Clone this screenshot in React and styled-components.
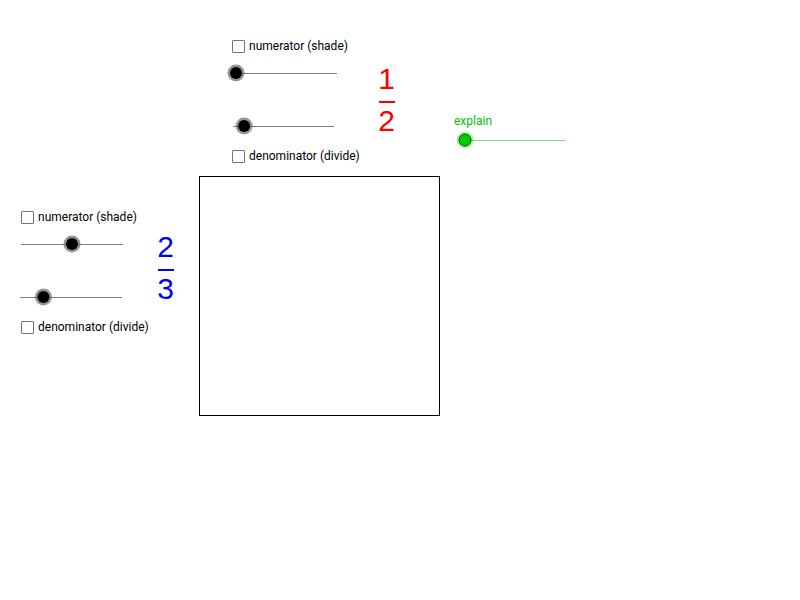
import React from 'react';
import styled, { createGlobalStyle } from 'styled-components';

const Global = createGlobalStyle`
  html, body {
    margin: 0;
    padding: 0;
    background: #fff;
  }
  body {
    font-family: Roboto, "Liberation Sans", sans-serif;
  }
`;

// the applet's drawing pad: every widget sits at its own spot on it
const Canvas = styled.div`
  position: relative;
  width: 800px;
  height: 600px;
  overflow: hidden;
  background: #fff;
`;

const Widget = styled.div`
  position: absolute;
  left: ${p => p.$x}px;
  top: ${p => p.$y}px;
  display: flex;
  align-items: flex-start;
`;

const Controls = styled.div`
  display: flex;
  flex-direction: column;
  align-items: flex-start;
  width: ${p => p.$width}px;
`;

const CheckRow = styled.label`
  display: flex;
  align-items: center;
  gap: 4px;
  height: 13px;
  margin-top: ${p => p.$gap || 0}px;
  font-size: 12px;
  line-height: 13px;
  color: #000;
  white-space: nowrap;
`;

const Box = styled.span`
  display: inline-block;
  width: 11px;
  height: 11px;
  border: 1px solid #757575;
  border-radius: 1px;
  background: #fff;
`;

const SliderSvg = styled.svg`
  display: block;
  margin-top: ${p => p.$gap || 0}px;
  margin-left: ${p => p.$shift || 0}px;
`;

const ExplainBox = styled.div`
  display: flex;
  flex-direction: column;
  gap: 2px;
`;

const Label = styled.span`
  font-size: 12px;
  line-height: 14px;
  color: ${p => p.$color || '#000'};
`;

const Frac = styled.div`
  display: flex;
  flex-direction: column;
  align-items: center;
  width: 19px;
  margin-top: ${p => p.$top}px;
  color: ${p => p.$color};
  font-family: "Liberation Sans", Arial, sans-serif;
  font-size: 30px;
  line-height: 30px;
`;

const Bar = styled.div`
  width: 16px;
  height: 1.5px;
  margin: 7px 0 3.5px;
  background: ${p => p.$color};
`;

const Square = styled.div`
  position: absolute;
  left: 199px;
  top: 176px;
  width: 239px;
  height: 238px;
  border: 1.5px solid #000;
`;

const Check = ({ gap, children }) => (
  <CheckRow $gap={gap}>
    <Box />
    {children}
  </CheckRow>
);

const Slider = ({
  length = 101,
  value,
  gap,
  shift,
  track = '#808080',
  fill = '#000',
  ring = 'rgba(80,80,80,0.6)',
  edge,
}) => {
  const kx = 10 + length * value;
  return (
    <SliderSvg width={length + 20} height={20} $gap={gap} $shift={shift}>
      <line x1={10} y1={10.5} x2={10 + length} y2={10.5} stroke={track} strokeWidth={1} />
      <circle cx={kx} cy={10} r={8.5} fill={ring} />
      <circle cx={kx} cy={10} r={6} fill={fill} stroke={edge || 'none'} strokeWidth={edge ? 1 : 0} />
    </SliderSvg>
  );
};

const Fraction = ({ num, den, color, top }) => (
  <Frac $color={color} $top={top}>
    <span>{num}</span>
    <Bar $color={color} />
    <span>{den}</span>
  </Frac>
);

const FractionControl = ({ x, y, width, num, den, color, fracTop, length, numValue, denValue, shifts }) => (
  <Widget $x={x} $y={y}>
    <Controls $width={width}>
      <Check>numerator (shade)</Check>
      <Slider length={length} value={numValue} gap={10} shift={shifts[0]} />
      <Slider length={length} value={denValue} gap={33} shift={shifts[1]} />
      <Check gap={14}>denominator (divide)</Check>
    </Controls>
    <Fraction num={num} den={den} color={color} top={fracTop} />
  </Widget>
);

export default function App() {
  return (
    <Canvas>
      <Global />

      <FractionControl
        x={232}
        y={40}
        width={145}
        num="1"
        den="2"
        color="#ff0000"
        fracTop={24}
        length={101}
        numValue={0}
        denValue={0.11}
        shifts={[-6, -9]}
      />

      <Widget $x={454} $y={114}>
        <ExplainBox>
          <Label $color="#00c000">explain</Label>
          <Slider
            value={0}
            shift={1}
            track="#7ee07e"
            fill="#00cc00"
            ring="rgba(0,200,0,0.35)"
            edge="#1a4a1a"
          />
        </ExplainBox>
      </Widget>

      <Square />

      <FractionControl
        x={21}
        y={211}
        width={135}
        num="2"
        den="3"
        color="#0000ff"
        fracTop={21}
        length={102}
        numValue={0.5}
        denValue={0.23}
        shifts={[-10, -11]}
      />
    </Canvas>
  );
}
